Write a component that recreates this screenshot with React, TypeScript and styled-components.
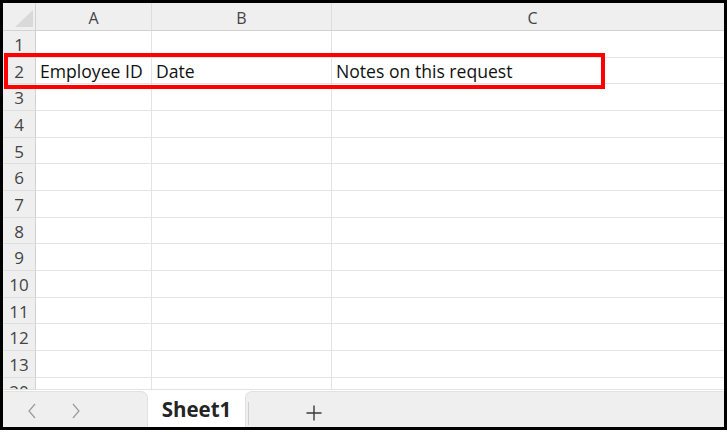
import React from "react";
import styled, { createGlobalStyle } from "styled-components";

const GlobalStyle = createGlobalStyle`
  html, body { margin: 0; padding: 0; background: #fff; }
  body { font-family: "Open Sans", "Liberation Sans", sans-serif; }
`;

const Frame = styled.div`
  box-sizing: border-box;
  width: 727px;
  height: 430px;
  border: 3px solid #000;
  position: relative;
  overflow: hidden;
  display: flex;
  flex-direction: column;
  background: #fff;
`;

const Sheet = styled.div`
  flex: none;
  height: 387px;
  display: grid;
  grid-template-columns: 33px 116px 180px 402px;
  grid-template-rows: 28px repeat(13, 26.667px) 12.333px;
  overflow: hidden;
`;

const Corner = styled.div`
  box-sizing: border-box;
  background: #efefef;
  border-right: 1px solid #d2d2d2;
  border-bottom: 1px solid #d2d2d2;
  display: flex;
`;

const ColHead = styled.div`
  box-sizing: border-box;
  background: #efefef;
  border-right: 1px solid #dcdcdc;
  border-bottom: 1px solid #d2d2d2;
  color: #444;
  font-size: 16px;
  line-height: 22px;
  padding-top: 4px;
  text-align: center;
`;

const RowHead = styled.div`
  box-sizing: border-box;
  background: #efefef;
  border-right: 1px solid #d2d2d2;
  border-bottom: 1px solid #dedede;
  color: #444;
  font-size: 17px;
  line-height: 25.67px;
  padding-top: 1px;
  text-align: center;
  overflow: hidden;
`;

const Cell = styled.div`
  box-sizing: border-box;
  border-right: 1px solid #e3e3e3;
  border-bottom: 1px solid #e3e3e3;
  color: #111;
  font-size: 17.6px;
  line-height: 25.67px;
  padding: 1px 0 0 4px;
  white-space: nowrap;
  overflow: visible;
  min-width: 0;
`;

const Highlight = styled.div`
  position: absolute;
  left: 1px;
  top: 50px;
  width: 601px;
  height: 36px;
  box-sizing: border-box;
  border: 4px solid #ff0000;
  pointer-events: none;
`;

const TabBar = styled.div`
  flex: none;
  height: 37px;
  display: flex;
  background: #fff;
`;

const NavArea = styled.div`
  box-sizing: border-box;
  width: 145px;
  margin-top: 1px;
  background: #efefef;
  border-top: 1px solid #e2e2e2;
  border-right: 1px solid #e2e2e2;
  border-top-right-radius: 7px;
  display: flex;
  align-items: center;
  padding: 3px 0 0 24px;
  gap: 34px;
`;

const ActiveTab = styled.div`
  width: 97px;
  display: flex;
  justify-content: center;
  box-sizing: border-box;
`;

const TabLabel = styled.div`
  font-family: "Open Sans", "Liberation Sans", sans-serif;
  font-weight: 700;
  font-size: 20.5px;
  line-height: 27px;
  padding-top: 6px;
  height: 33px;
  color: #242424;
  border-bottom: 3px solid #107c41;
`;

const RestArea = styled.div`
  box-sizing: border-box;
  flex: 1;
  margin-top: 1px;
  background: #efefef;
  border-top: 1px solid #e2e2e2;
  border-left: 1px solid #e2e2e2;
  border-top-left-radius: 7px;
  display: flex;
  align-items: flex-start;
  padding-left: 2px;
`;

const Divider = styled.div`
  width: 1px;
  height: 23px;
  margin-top: 10px;
  background: #cfcfcf;
`;

const AddButton = styled.div`
  margin-left: 56px;
  margin-top: 12px;
  display: flex;
`;

const Chevron = ({ dir }: { dir: "left" | "right" }) => (
  <svg width="10" height="16" viewBox="0 0 10 16">
    <polyline
      points={dir === "left" ? "8,1 2,8 8,15" : "2,1 8,8 2,15"}
      fill="none"
      stroke="#9a9a9a"
      strokeWidth="1.2"
    />
  </svg>
);

const columns = ["A", "B", "C"];
const rows: { label: string; cells: string[] }[] = [
  { label: "1", cells: ["", "", ""] },
  { label: "2", cells: ["Employee ID", "Date", "Notes on this request"] },
  ...Array.from({ length: 11 }, (_, i) => ({ label: String(i + 3), cells: ["", "", ""] })),
  { label: "20", cells: ["", "", ""] },
];

export default function App() {
  return (
    <>
      <GlobalStyle />
      <Frame>
        <Sheet>
          <Corner>
            <svg width="32" height="27" viewBox="0 0 32 27">
              <polygon points="12,24 30,24 30,7" fill="#d9d9d9" />
            </svg>
          </Corner>
          {columns.map((c) => (
            <ColHead key={c}>{c}</ColHead>
          ))}
          {rows.map((r) => (
            <React.Fragment key={r.label}>
              <RowHead>{r.label}</RowHead>
              {r.cells.map((v, i) => (
                <Cell key={i}>{v}</Cell>
              ))}
            </React.Fragment>
          ))}
        </Sheet>
        <TabBar>
          <NavArea>
            <Chevron dir="left" />
            <Chevron dir="right" />
          </NavArea>
          <ActiveTab>
            <TabLabel>Sheet1</TabLabel>
          </ActiveTab>
          <RestArea>
            <Divider />
            <AddButton>
              <svg width="18" height="18" viewBox="0 0 18 18">
                <path d="M9 1.5v15M1.5 9h15" stroke="#3a3a3a" strokeWidth="1.4" fill="none" />
              </svg>
            </AddButton>
          </RestArea>
        </TabBar>
        <Highlight />
      </Frame>
    </>
  );
}
